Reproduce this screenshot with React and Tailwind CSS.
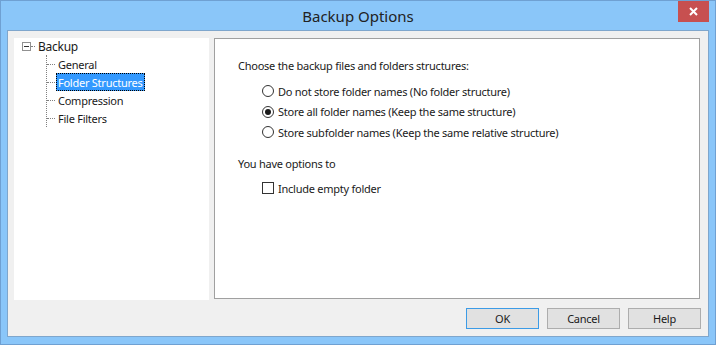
import React from "react";

const font = { fontFamily: '"Noto Sans", "Open Sans", Arial, sans-serif' };

function Radio({ checked, label }) {
  return (
    <div className="flex items-center h-[20px]">
      <div className="w-[12px] h-[12px] rounded-full border border-[#333333] bg-white flex items-center justify-center mr-[4px]">
        {checked && <div className="w-[6px] h-[6px] rounded-full bg-[#1a1a1a]" />}
      </div>
      <span>{label}</span>
    </div>
  );
}

function TreeItem({ label, selected }) {
  return (
    <div className="flex items-center h-[18px]">
      <div className="w-[8px] border-t border-dotted border-[#808080] mr-[1px]" />
      <span
        className={
          selected
            ? "px-[2px] h-[18px] flex items-center bg-[#3399ff] text-white outline outline-1 outline-dotted outline-[#000] -outline-offset-1"
            : "px-[2px]"
        }
      >
        {label}
      </span>
    </div>
  );
}

function Btn({ label, primary }) {
  return (
    <div
      className={
        "w-[73px] h-[21px] flex items-center justify-center bg-[#e1e1e1] border " +
        (primary ? "border-[#3c9be6]" : "border-[#adadad]")
      }
    >
      {label}
    </div>
  );
}

export default function App() {
  return (
    <div
      style={font}
      className="w-[716px] h-[345px] bg-[#8ac6f9] border border-[#6fa0d2] flex flex-col text-[11px] tracking-[-0.25px] text-[#1a1a1a] leading-none overflow-hidden"
    >
      <div className="h-[29px] relative flex items-center justify-center">
        <span className="text-[15px] tracking-normal text-[#222] mt-[2px]">Backup Options</span>
        <div className="absolute top-0 right-[6px] w-[31px] h-[21px] bg-[#c75050] flex items-center justify-center">
          <svg width="9" height="9" viewBox="0 0 9 9">
            <path d="M1 1 L8 8 M8 1 L1 8" stroke="white" strokeWidth="2" />
          </svg>
        </div>
      </div>
      <div className="flex-1 mx-[6px] mb-[7px] bg-[#f0f0f0] border border-[#7fa6cc] flex flex-col px-[6px] pt-[7px]">
        <div className="flex gap-[5px]">
          <div className="w-[195px] h-[262px] bg-white pl-[8px] pt-0">
            <div className="flex items-center h-[17px]">
              <div className="w-[9px] h-[9px] border border-[#919191] flex items-center justify-center bg-white">
                <div className="w-[5px] h-px bg-[#333]" />
              </div>
              <div className="w-[4px] border-t border-dotted border-[#808080] mr-[3px]" />
              <span className="text-[12px]">Backup</span>
            </div>
            <div className="ml-[24px] border-l border-dotted border-[#808080] relative">
              <TreeItem label="General" />
              <TreeItem label="Folder Structures" selected />
              <TreeItem label="Compression" />
              <TreeItem label="File Filters" />
            </div>
          </div>
          <div className="w-[486px] h-[261px] border border-[#a0a0a0] bg-white pl-[23px] pt-[20px]">
            <div className="h-[12px] flex items-center">Choose the backup files and folders structures:</div>
            <div className="pl-[24px] mt-[10px] flex flex-col gap-[0.5px]">
              <Radio label="Do not store folder names (No folder structure)" />
              <Radio checked label="Store all folder names (Keep the same structure)" />
              <Radio label="Store subfolder names (Keep the same relative structure)" />
            </div>
            <div className="h-[12px] flex items-center mt-[15px]">You have options to</div>
            <div className="pl-[24px] mt-[13px] flex items-center h-[12px]">
              <div className="w-[12px] h-[12px] border border-[#333333] bg-white mr-[4px]" />
              <span>Include empty folder</span>
            </div>
          </div>
        </div>
        <div className="flex justify-end gap-[8px] mt-[8px] pr-[1px]">
          <Btn label="OK" primary />
          <Btn label="Cancel" />
          <Btn label="Help" />
        </div>
      </div>
    </div>
  );
}
